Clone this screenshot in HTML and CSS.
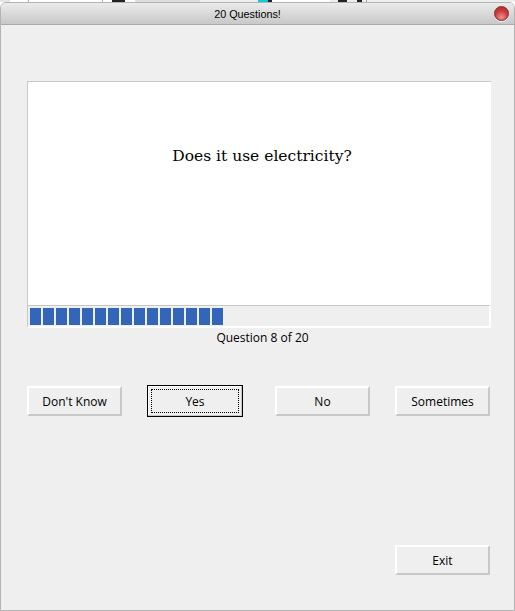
FILE: index.html
```html
<!DOCTYPE html>
<html lang="en">
<head>
    <meta charset="UTF-8">
    <title>20 Questions!</title>
    <link rel="stylesheet" href="styles.css">
</head>
<body>
    <div class="desktop-strip"></div>

    <div class="window">
        <div class="titlebar">
            <span class="title">20 Questions!</span>
            <span class="close"></span>
        </div>

        <div class="content">
            <div class="question-box">
                <p class="question">Does it use electricity?</p>
            </div>

            <div class="progress" id="progress"></div>
            <div class="progress-label">Question 8 of 20</div>

            <div class="answers">
                <button class="btn">Don't Know</button>
                <button class="btn btn-focus"><span>Yes</span></button>
                <button class="btn btn-no">No</button>
                <button class="btn">Sometimes</button>
            </div>

            <div class="footer">
                <button class="btn">Exit</button>
            </div>
        </div>
    </div>

    <script>
        // 15 blocks filled
        let progress = document.getElementById("progress");
        for (let i = 0; i < 15; i++) {
            progress.innerHTML += '<span class="block"></span>';
        }
    </script>
</body>
</html>
```

FILE: styles.css
```css
/* General Styles */
html, body {
    margin: 0;
    padding: 0;
}

body {
    width: 515px;
    height: 611px;
    background: #ffffff;
    overflow: hidden;
    font-family: 'Open Sans', 'Noto Sans', sans-serif;
    font-size: 12px;
    color: #000;
}

/* Bits of the desktop showing above the window */
.desktop-strip {
    height: 2px;
    background: linear-gradient(90deg,
        #e4e4e4 0 10px, #fff 10px 28px, #aaa 28px 29px, #fff 29px 102px, #aaa 102px 103px,
        #fff 103px 112px, #222 112px 125px, #fff 125px 135px, #ddd 135px 200px,
        #eee 200px 258px, #16c8d8 258px 268px, #223 268px 272px, #fff 272px 330px,
        #eee 330px 338px, #222 338px 347px, #eee 347px 357px, #222 357px 362px,
        #eee 362px 366px, #aaa 366px 367px, #eee 367px);
}

/* Window */
.window {
    box-sizing: border-box;
    height: 609px;
    background: #efefef;
    border: 1px solid #b4b4b4;
    border-radius: 6px 6px 0 0;
    overflow: hidden;
}

.titlebar {
    box-sizing: border-box;
    height: 22px;
    padding-right: 20px;
    display: flex;
    align-items: center;
    justify-content: center;
    position: relative;
    background: linear-gradient(#ebebeb, #c8c8c8);
    border-bottom: 1px solid #a9a9a9;
}

.title {
    font-family: 'Liberation Sans', Arial, sans-serif;
    font-size: 10.8px;
}

.close {
    position: absolute;
    right: 5px;
    top: 3px;
    width: 15px;
    height: 15px;
    border-radius: 50%;
    border: 1px solid #7a3030;
    box-sizing: border-box;
    background: radial-gradient(circle at 50% 80%, #f29090, #c93a3a 55%, #a82a2a);
    box-shadow: 0 1px 0 #f4f4f4;
}

/* Content */
.content {
    padding: 56px 23px 0 26px;
}

.question-box {
    box-sizing: border-box;
    height: 224px;
    background: #ffffff;
    border-top: 1px solid #c8c8c8;
    border-left: 1px solid #c8c8c8;
    padding: 65px 0 0 5px;
}

.question {
    margin: 0;
    text-align: center;
    font-family: 'DejaVu Serif', serif;
    font-size: 15.5px;
}

.progress {
    box-sizing: border-box;
    height: 23px;
    display: flex;
    gap: 2px;
    padding: 2px 2px 1px;
    border-top: 1px solid #c8c8c8;
    border-left: 1px solid #c8c8c8;
    border-right: 2px solid #ffffff;
    border-bottom: 2px solid #ffffff;
}

.block {
    width: 11px;
    background: #3366b8;
}

.progress-label {
    text-align: center;
    margin-top: 1px;
    padding-left: 7px;
    line-height: 17px;
}

/* Buttons */
.answers {
    display: flex;
    align-items: center;
    gap: 25px;
    margin-top: 39px;
}

.btn {
    box-sizing: border-box;
    width: 95px;
    height: 30px;
    padding: 0;
    background: #efefef;
    border: 2px solid;
    border-color: #ffffff #c8c8c8 #c8c8c8 #ffffff;
    font-family: 'Open Sans', 'Noto Sans', sans-serif;
    font-size: 12px;
    color: #000;
}

.btn-no {
    margin-left: 7px;
}

.btn-focus {
    width: 96px;
    height: 32px;
    border: 1px solid #000;
    outline: none;
    padding: 3px;
    box-shadow: inset -1px -1px 0 #c8c8c8, inset 1px 1px 0 #fff;
}

.btn-focus span {
    box-sizing: border-box;
    display: flex;
    align-items: center;
    justify-content: center;
    height: 100%;
    border: 1px dotted #000;
}

.footer {
    display: flex;
    justify-content: flex-end;
    padding-right: 1px;
    margin-top: 128px;
}
```
